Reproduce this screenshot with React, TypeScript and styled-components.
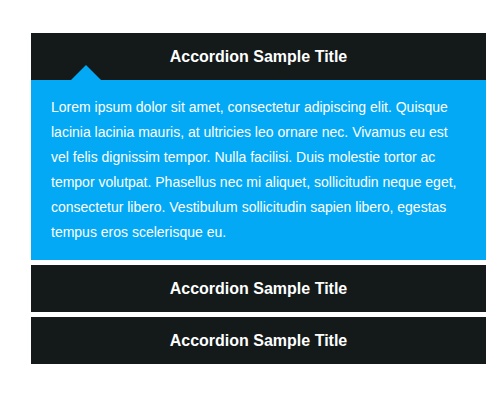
import React, { useState } from 'react';
import styled, { createGlobalStyle } from 'styled-components';

const GlobalStyle = createGlobalStyle`
  html, body {
    margin: 0;
    padding: 0;
    background: #ffffff;
  }
  body {
    font-family: 'Liberation Sans', Arial, sans-serif;
  }
`;

const Page = styled.div`
  padding: 33px 0 0 31px;
`;

const Accordion = styled.div`
  width: 455px;
  display: flex;
  flex-direction: column;
  gap: 5px;
`;

const Item = styled.section`
  display: flex;
  flex-direction: column;
`;

const Header = styled.button<{ $open: boolean }>`
  position: relative;
  height: 47px;
  border: 0;
  margin: 0;
  padding: 0;
  background: #141a1a;
  color: #ffffff;
  font-family: 'Liberation Sans', Arial, sans-serif;
  font-size: 16px;
  font-weight: 700;
  text-align: center;
  cursor: pointer;

  &::after {
    content: '';
    display: ${({ $open }) => ($open ? 'block' : 'none')};
    position: absolute;
    left: 40px;
    bottom: 0;
    width: 0;
    height: 0;
    border-left: 15px solid transparent;
    border-right: 15px solid transparent;
    border-bottom: 15px solid #03a9f4;
  }
`;

const Panel = styled.div`
  background: #03a9f4;
  color: #ffffff;
  padding: 15px 20px;
  font-size: 14px;
  line-height: 25px;
`;

const items = [
  {
    title: 'Accordion Sample Title',
    body:
      'Lorem ipsum dolor sit amet, consectetur adipiscing elit. Quisque lacinia lacinia mauris, at ultricies leo ornare nec. Vivamus eu est vel felis dignissim tempor. Nulla facilisi. Duis molestie tortor ac tempor volutpat. Phasellus nec mi aliquet, sollicitudin neque eget, consectetur libero. Vestibulum sollicitudin sapien libero, egestas tempus eros scelerisque eu.',
  },
  { title: 'Accordion Sample Title', body: 'Lorem ipsum dolor sit amet, consectetur adipiscing elit.' },
  { title: 'Accordion Sample Title', body: 'Lorem ipsum dolor sit amet, consectetur adipiscing elit.' },
];

export default function App() {
  const [open, setOpen] = useState(0);

  return (
    <>
      <GlobalStyle />
      <Page>
        <Accordion>
          {items.map((item, i) => (
            <Item key={i}>
              <Header $open={open === i} onClick={() => setOpen(open === i ? -1 : i)}>
                {item.title}
              </Header>
              {open === i && <Panel>{item.body}</Panel>}
            </Item>
          ))}
        </Accordion>
      </Page>
    </>
  );
}
